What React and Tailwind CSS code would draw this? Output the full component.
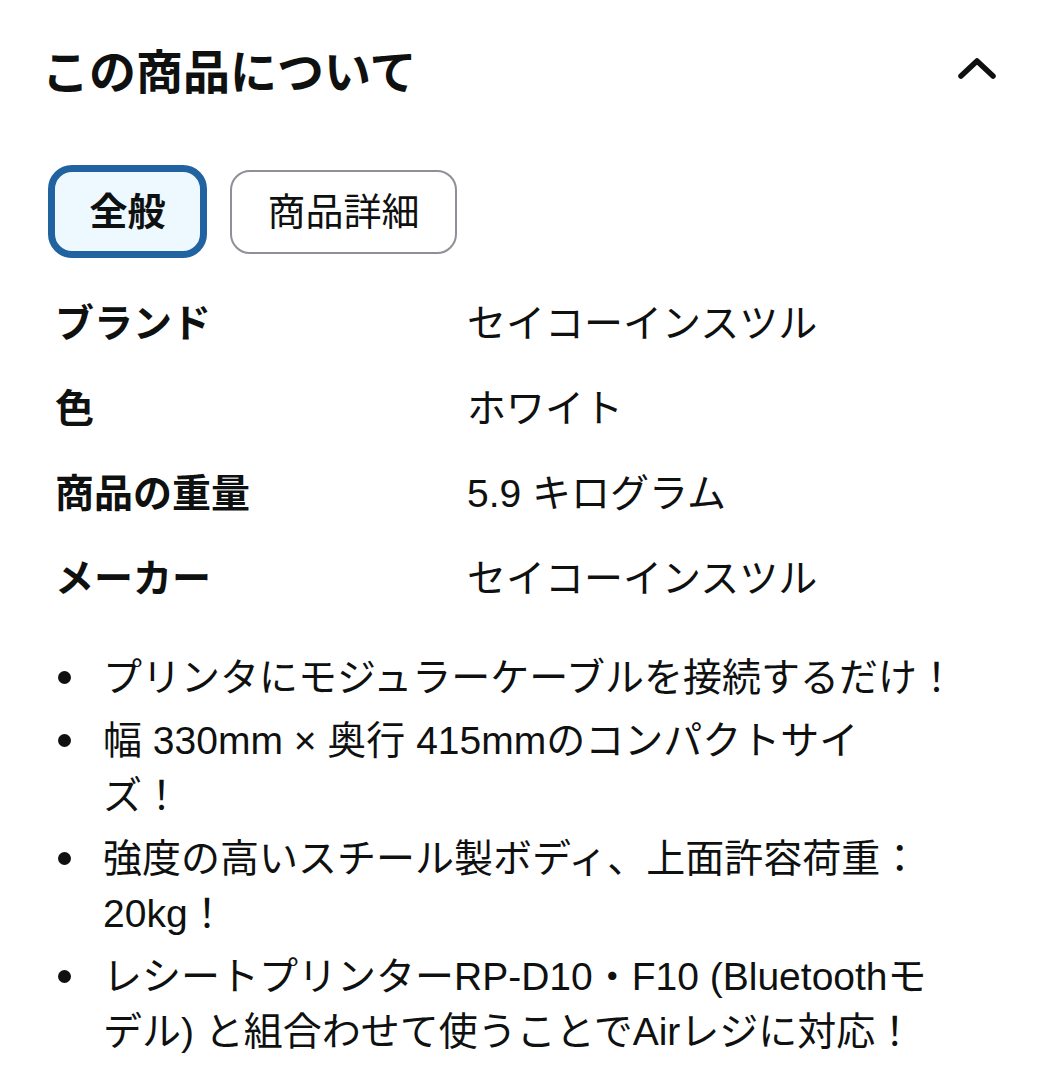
import React from "react";

const font = { fontFamily: '"Liberation Sans", "Noto Sans CJK JP", sans-serif' };

const rows = [
  ["ブランド", "セイコーインスツル"],
  ["色", "ホワイト"],
  ["商品の重量", "5.9 キログラム"],
  ["メーカー", "セイコーインスツル"],
];

const bullets = [
  ["プリンタにモジュラーケーブルを接続するだけ！"],
  ["幅 330mm × 奥行 415mmのコンパクトサイ", "ズ！"],
  ["強度の高いスチール製ボディ、上面許容荷重：", "20kg！"],
  ["レシートプリンターRP-D10・F10 (Bluetoothモ", "デル) と組合わせて使うことでAirレジに対応！"],
];

export default function App() {
  return (
    <div
      className="w-[1037px] h-[1080px] bg-white text-[#0f1111] overflow-hidden font-['Liberation_Sans','Noto_Sans_CJK_JP',sans-serif]"
      style={font}
    >
      <div className="pl-[45px] pr-[40px] pt-[44px]">
        <div className="flex items-center justify-between h-[58px]">
          <h2 className="text-[47px] leading-[58px] font-bold -ml-[3px]">この商品について</h2>
          <svg width="40" height="26" viewBox="0 0 40 26" className="-mt-[8px]">
            <path d="M4 20 L20 5 L36 20" fill="none" stroke="#0f1111" strokeWidth="5.5" strokeLinecap="round" strokeLinejoin="round" />
          </svg>
        </div>

        <div className="flex items-center gap-[23px] mt-[63px] ml-[3px]">
          <button className="w-[159px] h-[93px] rounded-[24px] border-[7px] border-[#2162a1] bg-[#edf8ff] text-[38px] font-bold leading-none flex items-center justify-center">
            全般
          </button>
          <button className="w-[227px] h-[84px] rounded-[20px] border-2 border-[#8d9096] bg-white text-[38px] leading-none flex items-center justify-center">
            商品詳細
          </button>
        </div>

        <div className="mt-[24px] ml-[10px]">
          {rows.map(([k, v], i) => (
            <div key={i} className="flex items-center h-[85px] text-[39px]">
              <div className="w-[412px] font-bold">{k}</div>
              <div>{v}</div>
            </div>
          ))}
        </div>

        <ul className="mt-[28px] flex flex-col gap-[8px]">
          {bullets.map((lines, i) => (
            <li key={i} className="flex text-[39px] leading-[55px]">
              <span className="w-[58px] shrink-0 flex justify-start pl-[13px] pt-[21px]">
                <span className="w-[13px] h-[13px] rounded-full bg-[#0f1111]" />
              </span>
              <span className="whitespace-nowrap">
                {lines.map((l, j) => (
                  <React.Fragment key={j}>
                    {j > 0 && <br />}
                    {l}
                  </React.Fragment>
                ))}
              </span>
            </li>
          ))}
        </ul>
      </div>
    </div>
  );
}
